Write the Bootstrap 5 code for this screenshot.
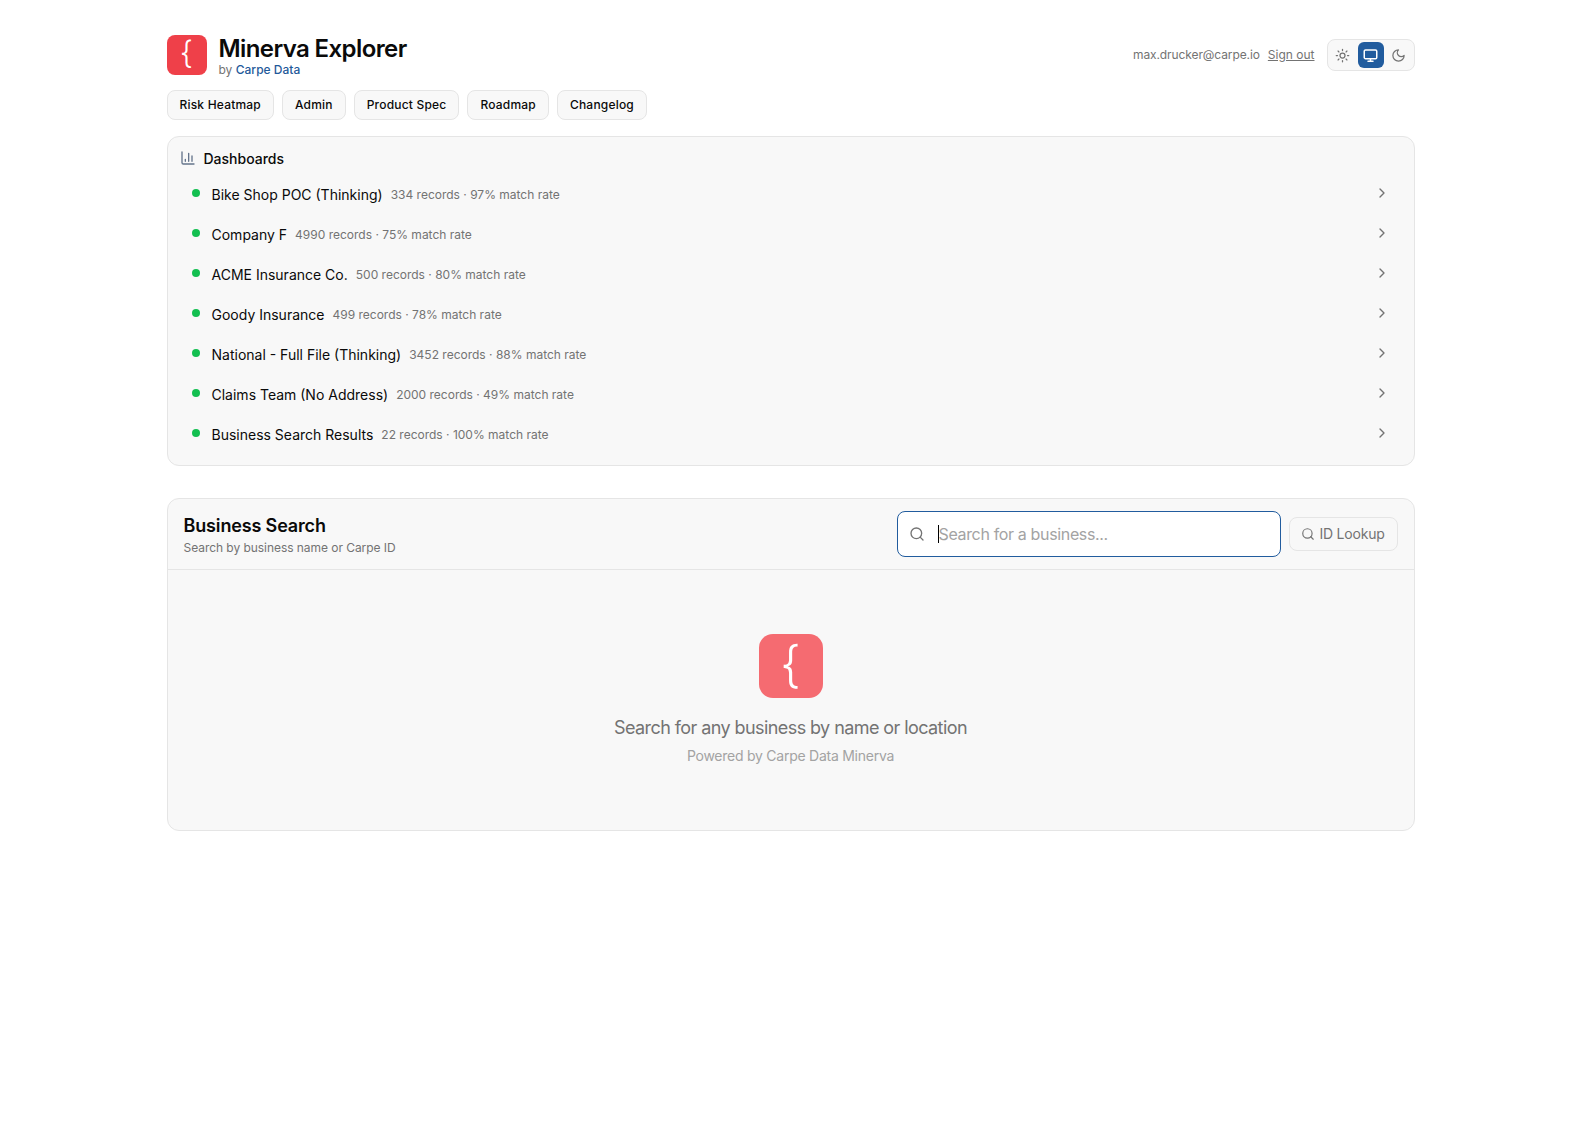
<!DOCTYPE html>
<html lang="en">
<head>
    <meta charset="UTF-8">
    <meta name="viewport" content="width=device-width, initial-scale=1.0">
    <title>Minerva Explorer</title>
    <link rel="stylesheet" href="https://cdn.jsdelivr.net/npm/bootstrap@5.3.0/dist/css/bootstrap.min.css">
    <style>
        body { font-family: Inter, "Liberation Sans", sans-serif; color: #0a0a0a; background: #fff; }
        .page-wrap { width: 1248px; margin: 0 auto; padding-top: 33px; }
        .logo-box { width: 40px; height: 40px; background: #ef4049; border-radius: 8px; color: #fff; font-size: 32px; line-height: 1; font-weight: 300; }
        .brand-text { padding-top: 2px; }
        .app-title { font-size: 24px; font-weight: 600; line-height: 28px; letter-spacing: -0.6px; margin: 0; }
        .app-by { font-size: 12px; line-height: 14px; color: #737373; }
        .app-by a { color: #1f5a9a; font-weight: 500; text-decoration: none; }
        .user-mail { font-size: 12px; color: #737373; letter-spacing: -0.1px; }
        .sign-out { font-size: 12px; color: #737373; margin-right: 12px; }
        .theme-switch { border: 1px solid #e5e5e5; border-radius: 8px; background: #f8f8f8; padding: 2px; height: 32px; gap: 2px; }
        .theme-btn { width: 26px; height: 26px; border-radius: 6px; color: #737373; }
        .theme-btn.active { background: #215c9e; color: #fff; }
        .top-links { margin-top: 13px; margin-bottom: 16px; }
        .top-link { font-size: 12px; font-weight: 500; letter-spacing: 0.2px; color: #0a0a0a; background: #f8f8f8; border: 1px solid #e5e5e5; border-radius: 8px; padding: 0 12px; height: 30px; line-height: 28px; }
        .panel { background: #f8f8f8; border: 1px solid #e5e5e5; border-radius: 12px; }
        .dash-panel { padding: 11px 16px 0 12px; height: 330px; margin-bottom: 32px; }
        .dash-head { font-size: 14px; font-weight: 500; height: 20px; margin-bottom: 6px; }
        .dash-head svg { color: #64748b; }
        .dash-row { height: 40px; padding-left: 12px; padding-right: 8px; }
        .dash-dot { width: 8px; height: 8px; border-radius: 50%; background: #13bf50; margin-right: 12px; position: relative; top: -1px; }
        .dash-name { font-size: 14px; color: #0a0a0a; margin-right: 8px; }
        .dash-meta { font-size: 12px; color: #737373; position: relative; top: 1px; }
        .dash-chev { position: relative; top: -1px; }
        .search-head { height: 71px; padding: 0 16px; border-bottom: 1px solid #e5e5e5; }
        .search-heading { padding-top: 2px; }
        .search-title { font-size: 18px; font-weight: 600; line-height: 24px; letter-spacing: -0.15px; margin: 0; }
        .search-sub { font-size: 12px; color: #737373; line-height: 16px; margin-top: 2px; letter-spacing: -0.05px; }
        .search-box { width: 384px; height: 46px; background: #fff; border: 1px solid #215c9e; border-radius: 8px; padding: 0 12px 0 11px; color: #737373; }
        .fake-caret { width: 1px; height: 18px; background: #000; margin-left: 13px; }
        .search-input { border: 0; outline: 0; background: transparent; font-size: 16px; letter-spacing: -0.35px; flex: 1; padding: 0; color: #0a0a0a; min-width: 0; caret-color: transparent; }
        .search-input::placeholder { color: #a3a3a3; }
        .id-btn { height: 34px; width: 109px; border: 1px solid #e5e5e5; border-radius: 8px; background: #f8f8f8; color: #737373; font-size: 14px; letter-spacing: -0.2px; gap: 4px; padding: 0 0 1px; }
        .empty-area { height: 260px; padding-top: 64px; }
        .empty-logo { width: 64px; height: 64px; border-radius: 14px; background: #f56b71; color: #fff; font-size: 50px; line-height: 1; font-weight: 300; }
        .empty-main { font-size: 18px; letter-spacing: -0.58px; color: #737373; line-height: 24px; margin-top: 18px; }
        .empty-sub { font-size: 14px; letter-spacing: -0.25px; color: #a3a3a3; line-height: 20px; margin-top: 6px; }
    </style>
</head>
<body>
    <div class="page-wrap">
        <header class="d-flex justify-content-between align-items-center">
            <div class="d-flex align-items-center gap-2">
                <div class="logo-box d-flex align-items-center justify-content-center me-1 pb-1">{</div>
                <div class="brand-text">
                    <h1 class="app-title">Minerva Explorer</h1>
                    <div class="app-by">by <a href="#">Carpe Data</a></div>
                </div>
            </div>
            <div class="d-flex align-items-center">
                <span class="user-mail me-2">max.drucker@carpe.io</span>
                <a href="#" class="sign-out">Sign out</a>
                <div class="theme-switch d-flex align-items-center">
                    <div class="theme-btn d-flex align-items-center justify-content-center">
                        <svg width="15" height="15" viewBox="0 0 24 24" fill="none" stroke="currentColor" stroke-width="2" stroke-linecap="round"><circle cx="12" cy="12" r="4"/><path d="M12 2v2M12 20v2M4.9 4.9l1.4 1.4M17.7 17.7l1.4 1.4M2 12h2M20 12h2M6.3 17.7l-1.4 1.4M19.1 4.9l-1.4 1.4"/></svg>
                    </div>
                    <div class="theme-btn active d-flex align-items-center justify-content-center">
                        <svg width="15" height="15" viewBox="0 0 24 24" fill="none" stroke="currentColor" stroke-width="2.4" stroke-linecap="round" stroke-linejoin="round"><rect x="2" y="3" width="20" height="14" rx="2"/><path d="M8 21h8M12 17v4"/></svg>
                    </div>
                    <div class="theme-btn d-flex align-items-center justify-content-center">
                        <svg width="15" height="15" viewBox="0 0 24 24" fill="none" stroke="currentColor" stroke-width="2" stroke-linecap="round" stroke-linejoin="round"><path d="M12 3a6 6 0 0 0 9 9 9 9 0 1 1-9-9Z"/></svg>
                    </div>
                </div>
            </div>
        </header>

        <nav class="top-links d-flex gap-2">
            <a href="#" class="top-link text-decoration-none">Risk Heatmap</a>
            <a href="#" class="top-link text-decoration-none">Admin</a>
            <a href="#" class="top-link text-decoration-none">Product Spec</a>
            <a href="#" class="top-link text-decoration-none">Roadmap</a>
            <a href="#" class="top-link text-decoration-none">Changelog</a>
        </nav>

        <section class="panel dash-panel">
            <div class="dash-head d-flex align-items-center gap-2">
                <svg width="16" height="16" viewBox="0 0 24 24" fill="none" stroke="currentColor" stroke-width="2" stroke-linecap="round" stroke-linejoin="round"><path d="M3 3v16a2 2 0 0 0 2 2h16"/><path d="M8 17v-3M13 17V5M18 17V9"/></svg>
                <span>Dashboards</span>
            </div>
            <div id="dashList"></div>
        </section>

        <section class="panel">
            <div class="search-head d-flex align-items-center justify-content-between">
                <div class="search-heading">
                    <h2 class="search-title">Business Search</h2>
                    <div class="search-sub">Search by business name or Carpe ID</div>
                </div>
                <div class="d-flex align-items-center gap-2">
                    <div class="search-box d-flex align-items-center">
                        <svg width="16" height="16" class="flex-shrink-0" viewBox="0 0 24 24" fill="none" stroke="currentColor" stroke-width="2" stroke-linecap="round"><circle cx="11" cy="11" r="8"/><path d="m21 21-4.3-4.3"/></svg>
                        <span class="fake-caret flex-shrink-0"></span>
                        <input type="text" class="search-input" id="searchBox" placeholder="Search for a business...">
                    </div>
                    <button class="id-btn d-flex align-items-center justify-content-center" type="button">
                        <svg width="14" height="14" viewBox="0 0 24 24" fill="none" stroke="currentColor" stroke-width="2" stroke-linecap="round"><circle cx="11" cy="11" r="8"/><path d="m21 21-4.3-4.3"/></svg>
                        ID Lookup
                    </button>
                </div>
            </div>
            <div class="empty-area d-flex flex-column align-items-center">
                <div class="empty-logo d-flex align-items-center justify-content-center pb-1">{</div>
                <div class="empty-main">Search for any business by name or location</div>
                <div class="empty-sub">Powered by Carpe Data Minerva</div>
            </div>
        </section>
    </div>

    <script>
        const dashboards = [
            ["Bike Shop POC (Thinking)", "334 records · 97% match rate"],
            ["Company F", "4990 records · 75% match rate"],
            ["ACME Insurance Co.", "500 records · 80% match rate"],
            ["Goody Insurance", "499 records · 78% match rate"],
            ["National - Full File (Thinking)", "3452 records · 88% match rate"],
            ["Claims Team (No Address)", "2000 records · 49% match rate"],
            ["Business Search Results", "22 records · 100% match rate"]
        ];
        document.getElementById("dashList").innerHTML = dashboards.map(d => `
            <div class="dash-row d-flex align-items-center">
                <span class="dash-dot"></span>
                <span class="dash-name">${d[0]}</span>
                <span class="dash-meta">${d[1]}</span>
                <svg class="dash-chev ms-auto" width="16" height="16" viewBox="0 0 24 24" fill="none" stroke="#737373" stroke-width="2" stroke-linecap="round" stroke-linejoin="round"><path d="m9 18 6-6-6-6"/></svg>
            </div>`).join("");
    </script>
    <script src="https://cdn.jsdelivr.net/npm/bootstrap@5.3.0/dist/js/bootstrap.bundle.min.js"></script>
</body>
</html>
